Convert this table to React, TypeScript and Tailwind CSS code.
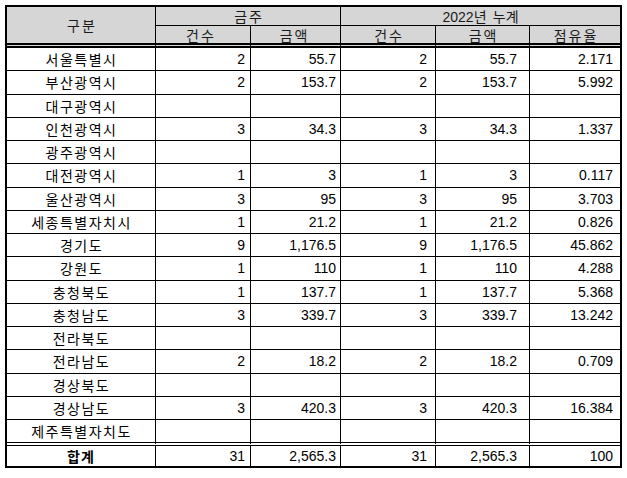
import React from "react";

type Row = [string, string, string, string, string, string];

const rows: Row[] = [
  ["서울특별시", "2", "55.7", "2", "55.7", "2.171"],
  ["부산광역시", "2", "153.7", "2", "153.7", "5.992"],
  ["대구광역시", "", "", "", "", ""],
  ["인천광역시", "3", "34.3", "3", "34.3", "1.337"],
  ["광주광역시", "", "", "", "", ""],
  ["대전광역시", "1", "3", "1", "3", "0.117"],
  ["울산광역시", "3", "95", "3", "95", "3.703"],
  ["세종특별자치시", "1", "21.2", "1", "21.2", "0.826"],
  ["경기도", "9", "1,176.5", "9", "1,176.5", "45.862"],
  ["강원도", "1", "110", "1", "110", "4.288"],
  ["충청북도", "1", "137.7", "1", "137.7", "5.368"],
  ["충청남도", "3", "339.7", "3", "339.7", "13.242"],
  ["전라북도", "", "", "", "", ""],
  ["전라남도", "2", "18.2", "2", "18.2", "0.709"],
  ["경상북도", "", "", "", "", ""],
  ["경상남도", "3", "420.3", "3", "420.3", "16.384"],
  ["제주특별자치도", "", "", "", "", ""],
];

const font = {
  fontFamily: '"Noto Sans CJK KR", "Noto Sans", sans-serif',
};

const num = "font-['Liberation_Sans',Arial,sans-serif] text-[14px]";

export default function App() {
  return (
    <div className="w-[627px] h-[478px] bg-white pl-[5px] pt-[5px]" style={font}>
      <table className="table-fixed border-separate border-spacing-0 w-[617px] border-2 border-black text-[14px] leading-none text-black">
        <colgroup>
          <col className="w-[149px]" />
          <col className="w-[95px]" />
          <col className="w-[90px]" />
          <col className="w-[95px]" />
          <col className="w-[94px]" />
          <col className="w-[90px]" />
        </colgroup>
        <thead>
          <tr className="h-[19px] bg-[#d6d6d6] text-[#1a1a1a]">
            <th
              rowSpan={2}
              className="border-r border-b-[5px] border-double border-r-solid border-black font-normal p-0 pl-[2px] tracking-[2px]"
            >
              구분
            </th>
            <th colSpan={2} className="border-r border-b border-solid border-black font-normal p-0 pl-[2px] tracking-[2px]">
              금주
            </th>
            <th colSpan={3} className="border-b border-solid border-black font-normal p-0 whitespace-pre">
              <span className={num}>2022</span>년  누계
            </th>
          </tr>
          <tr className="h-[22px] bg-[#d6d6d6] text-[#1a1a1a]">
            <th className="border-r border-b-[5px] border-double border-r-solid border-black font-normal p-0 pr-[4px] tracking-[2px]">건수</th>
            <th className="border-r border-b-[5px] border-double border-r-solid border-black font-normal p-0 pr-[2px] tracking-[2px]">금액</th>
            <th className="border-r border-b-[5px] border-double border-r-solid border-black font-normal p-0 pl-[2px] tracking-[2px]">건수</th>
            <th className="border-r border-b-[5px] border-double border-r-solid border-black font-normal p-0 pl-[2px] tracking-[2px]">금액</th>
            <th className="border-b-[5px] border-double border-black font-normal p-0 pl-[2px] tracking-[2px]">점유율</th>
          </tr>
        </thead>
        <tbody>
          {rows.map((r, i) => {
            const last = i === rows.length - 1;
            const rowH = last ? "h-[26px]" : "h-[23.25px]";
            const b = last ? "border-r border-b-4 border-double border-r-solid" : "border-r border-b border-solid";
            const b6 = last ? "border-b-4 border-double" : "border-b border-solid";
            return (
              <tr key={i} className={rowH}>
                <td className={`${b} border-black p-0 pl-[1px] text-center tracking-[1.5px]`}>{r[0]}</td>
                <td className={`${b} border-black p-0 pr-[5px] text-right ${num}`}>{r[1]}</td>
                <td className={`${b} border-black p-0 pr-[4px] text-right ${num}`}>{r[2]}</td>
                <td className={`${b} border-black p-0 pr-[8px] text-right ${num}`}>{r[3]}</td>
                <td className={`${b} border-black p-0 pr-[12px] text-right ${num}`}>{r[4]}</td>
                <td className={`${b6} border-black p-0 pr-[7px] text-right ${num}`}>{r[5]}</td>
              </tr>
            );
          })}
          <tr className="h-[20px]">
            <td className="border-r border-solid border-black p-0 text-center font-bold tracking-[1px]">합계</td>
            <td className={`border-r border-solid border-black p-0 pr-[5px] text-right ${num}`}>31</td>
            <td className={`border-r border-solid border-black p-0 pr-[4px] text-right ${num}`}>2,565.3</td>
            <td className={`border-r border-solid border-black p-0 pr-[8px] text-right ${num}`}>31</td>
            <td className={`border-r border-solid border-black p-0 pr-[12px] text-right ${num}`}>2,565.3</td>
            <td className={`p-0 pr-[7px] text-right ${num}`}>100</td>
          </tr>
        </tbody>
      </table>
    </div>
  );
}
